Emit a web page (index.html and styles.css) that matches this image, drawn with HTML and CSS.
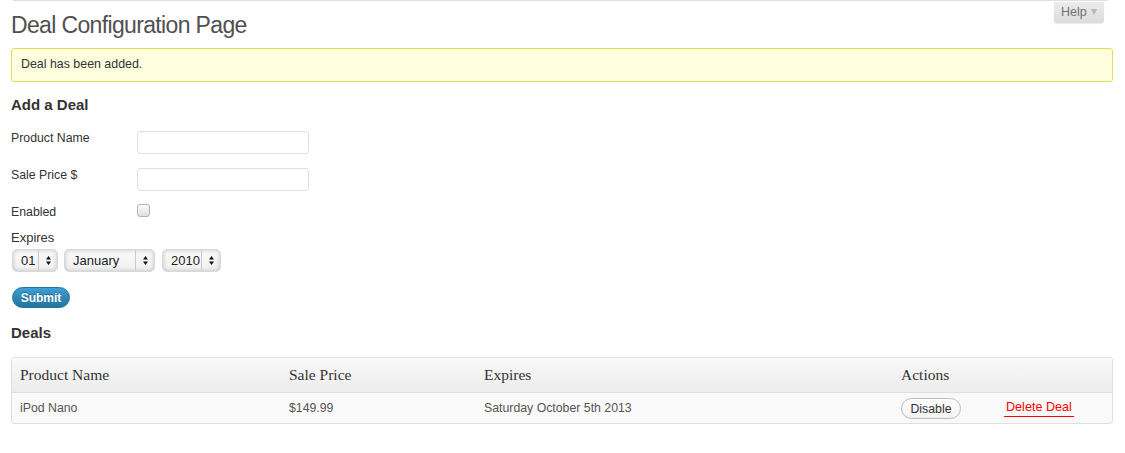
FILE: index.html
```html
<!DOCTYPE html>
<html lang="en">
<head>
<meta charset="utf-8">
<title>Deal Configuration Page</title>
<link rel="stylesheet" href="styles.css">
</head>
<body>
<div class="wrap">
  <div class="topline"></div>
  <div class="header">
    <h1 class="title">Deal Configuration Page</h1>
    <button class="help" type="button">Help <span class="help-arrow"></span></button>
  </div>

  <div class="notice">Deal has been added.</div>

  <h2 class="section">Add a Deal</h2>
  <form class="deal-form">
    <div class="row">
      <label class="lbl" for="pname">Product Name</label>
      <input class="txt" id="pname" type="text">
    </div>
    <div class="row">
      <label class="lbl" for="price">Sale Price $</label>
      <input class="txt" id="price" type="text">
    </div>
    <div class="row">
      <label class="lbl" for="enabled">Enabled</label>
      <input class="chk" id="enabled" type="checkbox">
    </div>
    <div class="expires-lbl">Expires</div>
    <div class="selects">
      <div class="sel sel-day"><span class="sel-val">01</span><span class="sel-arrow"><svg width="5" height="9" viewBox="0 0 5 9"><path d="M2.5 0 L5 3.5 L0 3.5 Z M0 5.5 L5 5.5 L2.5 9 Z" fill="#111"/></svg></span></div>
      <div class="sel sel-month"><span class="sel-val">January</span><span class="sel-arrow"><svg width="5" height="9" viewBox="0 0 5 9"><path d="M2.5 0 L5 3.5 L0 3.5 Z M0 5.5 L5 5.5 L2.5 9 Z" fill="#111"/></svg></span></div>
      <div class="sel sel-year"><span class="sel-val">2010</span><span class="sel-arrow"><svg width="5" height="9" viewBox="0 0 5 9"><path d="M2.5 0 L5 3.5 L0 3.5 Z M0 5.5 L5 5.5 L2.5 9 Z" fill="#111"/></svg></span></div>
    </div>
    <button class="submit" type="button">Submit</button>
  </form>

  <h2 class="section deals-title">Deals</h2>
  <table class="deals">
    <colgroup>
      <col class="c1"><col class="c2"><col class="c3"><col class="c4"><col class="c5">
    </colgroup>
    <thead>
      <tr>
        <th>Product Name</th>
        <th>Sale Price</th>
        <th>Expires</th>
        <th colspan="2">Actions</th>
      </tr>
    </thead>
    <tbody>
      <tr>
        <td>iPod Nano</td>
        <td>$149.99</td>
        <td>Saturday October 5th 2013</td>
        <td><button class="pill" type="button">Disable</button></td>
        <td><a class="delete" href="#">Delete Deal</a></td>
      </tr>
    </tbody>
  </table>
</div>
</body>
</html>
```

FILE: styles.css
```css
html, body {
  margin: 0;
  padding: 0;
  background: #fff;
}
body {
  font-family: "Liberation Sans", Arial, sans-serif;
  color: #333;
  font-size: 12.3px;
}
.wrap {
  padding: 0 12px 0 11px;
}
.topline {
  height: 1px;
  background: #dfdfdf;
  margin: 0 5px 0 2px;
}
.header {
  display: flex;
  justify-content: space-between;
  align-items: flex-start;
}
.title {
  margin: 0;
  padding-top: 10px;
  font-size: 23px;
  line-height: 29px;
  font-weight: normal;
  letter-spacing: -0.65px;
  color: #505050;
}
.help {
  margin: 1px 9px 0 0;
  height: 21px;
  width: 50px;
  padding: 0 0 2px 7px;
  border: none;
  border-radius: 0 0 3px 3px;
  background: linear-gradient(#ebebeb, #dcdcdc);
  box-shadow: 0 1px 1px rgba(0,0,0,0.08);
  font-family: "Liberation Sans", Arial, sans-serif;
  font-size: 12.5px;
  color: #707070;
  text-align: left;
  display: flex;
  align-items: center;
  gap: 4px;
}
.help-arrow {
  width: 0;
  height: 0;
  border-left: 3.5px solid transparent;
  border-right: 3.5px solid transparent;
  border-top: 6px solid #b5b5b5;
  margin-top: 1px;
}
.notice {
  margin-top: 8px;
  padding: 7px 9px 9px;
  line-height: 16px;
  font-size: 12.4px;
  background: #ffffe0;
  border: 1px solid #e6db55;
  border-radius: 3px;
  color: #333;
}
.section {
  margin: 14px 0 17px;
  font-size: 15px;
  line-height: 18px;
  font-weight: bold;
  color: #333;
}
.deal-form {
  margin: 0;
}
.row {
  display: flex;
  align-items: flex-start;
  margin-bottom: 14px;
}
.row:nth-child(3) {
  margin-bottom: 0;
}
.lbl {
  width: 126px;
  flex: none;
  line-height: 15px;
  color: #333;
}
.txt {
  box-sizing: border-box;
  width: 172px;
  height: 23px;
  margin: 0;
  border: 1px solid #dfdfdf;
  border-radius: 3px;
  background: #fff;
}
.chk {
  appearance: none;
  -webkit-appearance: none;
  box-sizing: border-box;
  width: 13px;
  height: 13px;
  margin: -1px 0 0 0;
  border: 1px solid #b4b4b4;
  border-radius: 3px;
  background: linear-gradient(#fdfdfd, #dedede);
}
.expires-lbl {
  margin: 10px 0 3px;
  font-size: 13px;
  line-height: 16px;
  color: #333;
}
.selects {
  display: flex;
  margin-left: 1px;
}
.sel {
  box-sizing: border-box;
  height: 23px;
  display: flex;
  align-items: stretch;
  border: 1px solid #d8d8d8;
  border-radius: 5px;
  background: linear-gradient(#fafafa, #f0f0f0);
  box-shadow: inset 0 0 4px rgba(0,0,0,0.22);
  font-size: 13px;
  color: #222;
}
.sel-val {
  flex: 1;
  display: flex;
  align-items: center;
  padding: 0 0 1px 8px;
}
.sel-arrow {
  width: 18px;
  flex: none;
  display: flex;
  align-items: center;
  justify-content: center;
  border-left: 1px solid #c9c9c9;
}
.sel-day { width: 46px; margin-right: 6px; }
.sel-month { width: 91px; margin-right: 7px; }
.sel-year { width: 59px; }
.submit {
  display: block;
  margin: 15px 0 0 1px;
  box-sizing: border-box;
  width: 58px;
  height: 21px;
  padding: 0;
  border: 1px solid #21759b;
  border-radius: 11px;
  background: linear-gradient(#3d9fd3, #21759b);
  color: #fff;
  font-family: "Liberation Sans", Arial, sans-serif;
  font-weight: bold;
  font-size: 12px;
  text-shadow: 0 -1px 0 rgba(0,0,0,0.3);
}
.deals-title {
  margin: 16px 0 15px;
}
.deals {
  width: 100%;
  table-layout: fixed;
  border-collapse: separate;
  border-spacing: 0;
  border: 1px solid #dfdfdf;
  border-radius: 3px;
  background: #f9f9f9;
}
.c1 { width: 269px; }
.c2 { width: 195px; }
.c3 { width: 417px; }
.c4 { width: 103px; }
.deals th {
  height: 34px;
  padding: 0 8px;
  text-align: left;
  font-family: "Liberation Serif", "Times New Roman", serif;
  font-size: 15.5px;
  font-weight: normal;
  color: #333;
  background: linear-gradient(#f9f9f9, #ececec);
  border-bottom: 1px solid #dfdfdf;
  vertical-align: middle;
}
.deals td {
  height: 30px;
  padding: 0 8px;
  font-size: 12.3px;
  color: #555;
  vertical-align: middle;
}
.pill {
  box-sizing: border-box;
  width: 60px;
  height: 21px;
  padding: 0;
  margin-top: 1px;
  border: 1px solid #bbb;
  border-radius: 11px;
  background: linear-gradient(#fefefe, #f2f2f2);
  font-family: "Liberation Sans", Arial, sans-serif;
  font-size: 12.3px;
  color: #333;
}
.delete {
  display: inline-block;
  padding: 0 2px 1px;
  line-height: 15px;
  border-bottom: 1px solid #ff0000;
  color: #ff0000;
  text-decoration: none;
  font-size: 12.6px;
}
```
